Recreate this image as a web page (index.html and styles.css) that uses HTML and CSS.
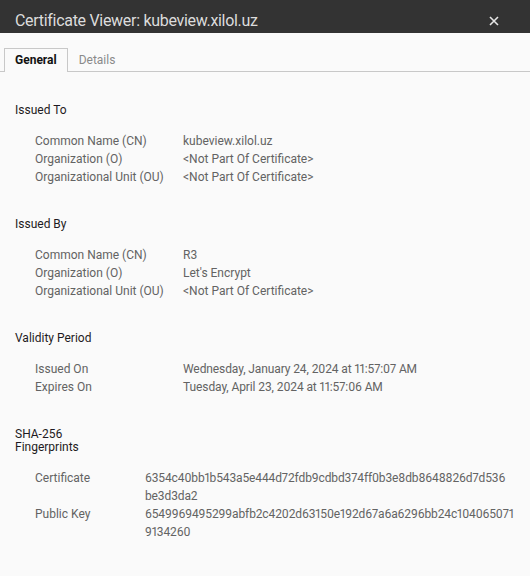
FILE: index.html
```html
<!DOCTYPE html>
<html>
<head>
<meta charset="utf-8">
<link rel="stylesheet" href="styles.css">
</head>
<body>
<div class="titlebar">
  <span class="title">Certificate Viewer: kubeview.xilol.uz</span>
  <svg class="close" width="10" height="10" viewBox="0 0 10 10"><path d="M1 1L9 9M9 1L1 9" stroke="#e6e6e6" stroke-width="1.6" fill="none"/></svg>
</div>
<div class="tabs">
  <div class="tab active">General</div>
  <div class="tab">Details</div>
</div>
<div class="content">
  <section class="section">
    <h2 class="heading">Issued To</h2>
    <div class="rows">
      <div class="label">Common Name (CN)</div><div class="value">kubeview.xilol.uz</div>
      <div class="label">Organization (O)</div><div class="value">&lt;Not Part Of Certificate&gt;</div>
      <div class="label">Organizational Unit (OU)</div><div class="value">&lt;Not Part Of Certificate&gt;</div>
    </div>
  </section>
  <section class="section">
    <h2 class="heading">Issued By</h2>
    <div class="rows">
      <div class="label">Common Name (CN)</div><div class="value">R3</div>
      <div class="label">Organization (O)</div><div class="value">Let's Encrypt</div>
      <div class="label">Organizational Unit (OU)</div><div class="value">&lt;Not Part Of Certificate&gt;</div>
    </div>
  </section>
  <section class="section">
    <h2 class="heading">Validity Period</h2>
    <div class="rows">
      <div class="label">Issued On</div><div class="value date">Wednesday, January 24, 2024 at 11:57:07 AM</div>
      <div class="label">Expires On</div><div class="value date">Tuesday, April 23, 2024 at 11:57:06 AM</div>
    </div>
  </section>
  <section class="section">
    <h2 class="heading">SHA-256<br>Fingerprints</h2>
    <div class="rows fp">
      <div class="label">Certificate</div><div class="value hex">6354c40bb1b543a5e444d72fdb9cdbd374ff0b3e8db8648826d7d536<br>be3d3da2</div>
      <div class="label">Public Key</div><div class="value hex">6549969495299abfb2c4202d63150e192d67a6a6296bb24c104065071<br>9134260</div>
    </div>
  </section>
</div>
</body>
</html>
```
FILE: styles.css
```css
html, body {
  margin: 0;
  padding: 0;
  background: #fafafa;
  font-family: Roboto, "Noto Sans", sans-serif;
  font-variant-numeric: proportional-nums;
}
.titlebar {
  height: 33px;
  box-sizing: border-box;
  background: #333333;
  display: flex;
  align-items: center;
  justify-content: space-between;
  padding: 8px 31px 0 15px;
}
.title {
  color: #dcdcdc;
  font-size: 16px;
  letter-spacing: -0.3px;
  line-height: 20px;
}
.close {
  display: block;
  margin-top: 1px;
}
.tabs {
  display: flex;
  margin-top: 15px;
  padding-left: 4px;
  border-bottom: 1px solid #c8c8c8;
  height: 23px;
}
.tab {
  font-size: 12px;
  line-height: 22px;
  padding: 0 10px;
  color: #8a8a8a;
  border: 1px solid transparent;
  border-bottom: none;
}
.tab.active {
  color: #111;
  font-weight: bold;
  border-color: #c8c8c8;
  background: #fafafa;
  height: 23px;
}
.content {
  padding: 0 15px;
}
.section {
  padding-top: 32px;
}
.heading {
  margin: 0;
  font-size: 12px;
  font-weight: normal;
  line-height: 13px;
  color: #1e1a22;
}
.rows {
  display: grid;
  grid-template-columns: 148px 1fr;
  margin-top: 15px;
  padding-left: 20px;
  font-size: 12px;
  line-height: 18px;
  color: #636363;
}
.rows.fp {
  grid-template-columns: 110px 1fr;
}
.date {
  letter-spacing: -0.1px;
}
.hex {
  white-space: nowrap;
  letter-spacing: -0.12px;
}
```
